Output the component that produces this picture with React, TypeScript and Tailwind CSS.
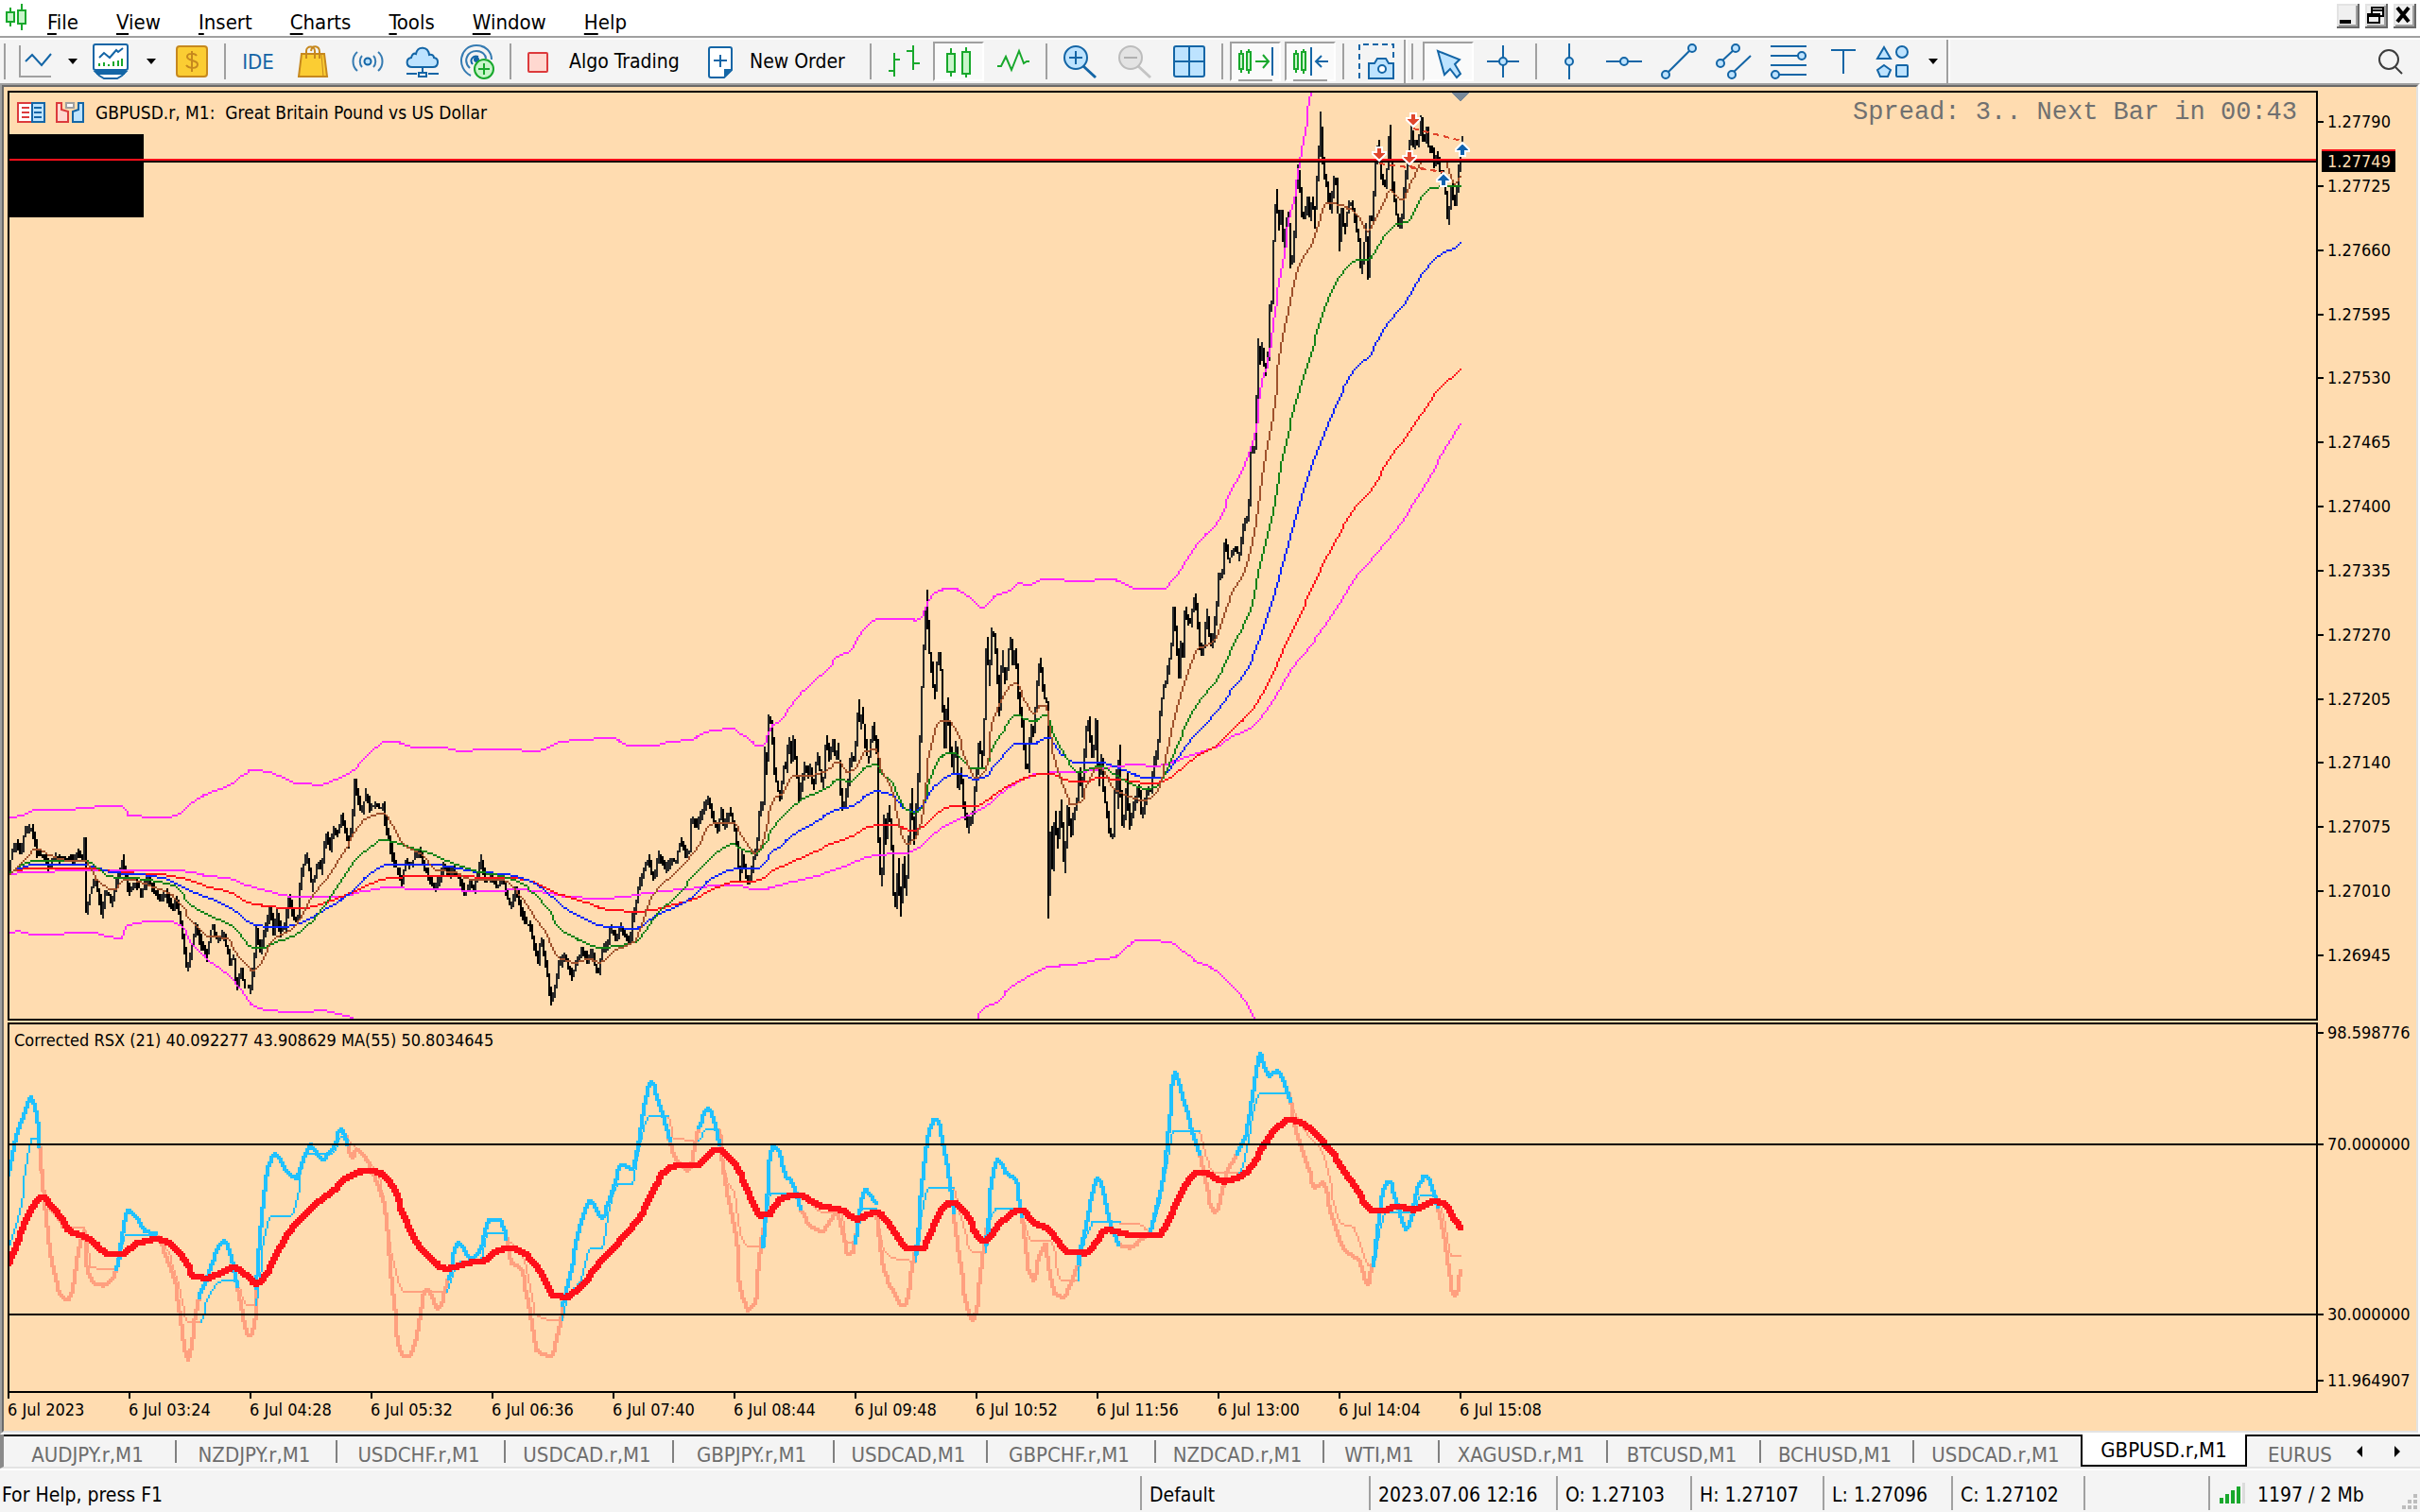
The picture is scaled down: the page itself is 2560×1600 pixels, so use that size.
import React from "react";

type Pt = [number, number];
type Frame = { ox: number; oy: number; sx: number; sy: number };

/* Each stretch of the history is digitised in its own local frame. */
const A: Frame = { ox: -10, oy: 662, sx: 1.912, sy: 3 };
const B: Frame = { ox: 770, oy: 502, sx: 2.8, sy: 3 };
const C: Frame = { ox: 1190, oy: -18, sx: 3, sy: 2.01 };
const D: Frame = { ox: -11, oy: -14, sx: 1.96, sy: 3 };
const E: Frame = { ox: 769, oy: -14, sx: 1.96, sy: 3 };

function pts(f: Frame, s: string): Pt[] {
  return s
    .trim()
    .split(/\s+/)
    .map((p) => {
      const [x, y] = p.split(",").map(Number);
      return [f.ox + x / f.sx, f.oy + y / f.sy] as Pt;
    });
}

/* Monotone cubic interpolation, so that peaks are rounded but never overshot. */
function smooth(p: Pt[]): Pt[] {
  const q = p.filter((v, i) => i === 0 || v[0] > p[i - 1][0]);
  const n = q.length;
  if (n < 3) return q;
  const slope = (i: number) => (q[i + 1][1] - q[i][1]) / (q[i + 1][0] - q[i][0]);
  const m = q.map((_, i) => {
    if (i === 0) return slope(0);
    if (i === n - 1) return slope(n - 2);
    const a = slope(i - 1);
    const b = slope(i);
    return a * b <= 0 ? 0 : (2 * a * b) / (a + b);
  });
  const out: Pt[] = [q[0]];
  for (let i = 0; i < n - 1; i++) {
    const [x0, y0] = q[i];
    const [x1, y1] = q[i + 1];
    const h = x1 - x0;
    const steps = Math.max(1, Math.ceil(h / 2));
    for (let k = 1; k <= steps; k++) {
      const t = k / steps;
      const t2 = t * t;
      const t3 = t2 * t;
      out.push([
        x0 + h * t,
        (2 * t3 - 3 * t2 + 1) * y0 + (t3 - 2 * t2 + t) * h * m[i] + (3 * t2 - 2 * t3) * y1 + (t3 - t2) * h * m[i + 1],
      ]);
    }
  }
  return out;
}

/* Draws a curve as square cells on a two-pixel grid. */
function raster(source: Pt[], size = 2): string {
  const points = smooth(source);
  let d = "";
  const off = size > 2 ? -(size - 2) / 2 : 0;
  const cell = (v: number) => Math.round((v - 1) / 2);
  for (let i = 1; i < points.length; i++) {
    let x = cell(points[i - 1][0]);
    let y = cell(points[i - 1][1]);
    const x1 = cell(points[i][0]);
    const y1 = cell(points[i][1]);
    const dx = Math.abs(x1 - x);
    const dy = -Math.abs(y1 - y);
    const ix = x < x1 ? 1 : -1;
    const iy = y < y1 ? 1 : -1;
    let err = dx + dy;
    for (;;) {
      d += `M${x * 2 + off} ${y * 2 + off}h${size}v${size}h-${size}z`;
      if (x === x1 && y === y1) break;
      const e2 = 2 * err;
      if (e2 >= dy) {
        err += dy;
        x += ix;
      }
      if (e2 <= dx) {
        err += dx;
        y += iy;
      }
    }
  }
  return d;
}

function candles(points: Pt[]): { up: string; down: string } {
  let seed = 7;
  const rnd = () => {
    seed = (seed * 16807) % 2147483647;
    return seed / 2147483647;
  };
  const at = (x: number) => {
    for (let i = 1; i < points.length; i++) {
      if (points[i][0] >= x) {
        const [ax, ay] = points[i - 1];
        const [bx, by] = points[i];
        return bx === ax ? by : ay + ((by - ay) * (x - ax)) / (bx - ax);
      }
    }
    return points[points.length - 1][1];
  };
  let up = "";
  let down = "";
  const last = points[points.length - 1][0];
  for (let x = 0; x <= last; x += 2) {
    const ys = [at(x), at(x + 2)];
    points.forEach((p) => {
      if (p[0] > x && p[0] < x + 2) ys.push(p[1]);
    });
    const top = Math.round((Math.min(...ys) - rnd() * 6) / 2) * 2;
    const bot = Math.round((Math.max(...ys) + rnd() * 6) / 2) * 2;
    const bar = `M${x} ${top}h2V${bot}h-2z`;
    if (ys[1] < ys[0]) up += bar;
    else down += bar;
  }
  return { up, down };
}

const PRICE = candles([
  ...pts(A, `20,475 26,420 36,400 44,430 52,355 66,352 76,425 90,440 100,470 112,445 150,450 158,430 170,450 172,385 176,610 186,540 196,520 208,620 216,545 228,590 240,500 250,445 262,550 275,520 288,555 300,510 312,545 326,575 338,560 350,610 358,575 368,660 380,805 390,720 398,655 408,720 420,755 430,655 440,700 455,690 466,770 474,760 480,860 488,800 496,850 508,860 514,790 520,680 528,740 536,680 548,605 556,690 560,610 568,680 578,660 586,570 596,640 604,640 606,550 612,490 622,430 632,535 646,460 652,490 660,370 670,410 676,350 684,365 692,315 706,400 714,340 718,205 724,240 732,300 742,240 750,290 762,270 770,290 776,270 782,350 790,400 798,460 806,480 814,530 822,450 830,470 848,420 858,470 868,500 878,540 890,510 898,470 910,500 920,480 930,510 942,555 952,525 960,545 974,450 984,520 996,500 1006,540 1018,500 1026,560 1034,600 1046,540 1054,610 1064,650 1074,660 1084,740 1090,770 1096,700 1106,790 1116,900 1124,860 1132,780 1144,755 1158,820 1166,780 1178,735 1190,765 1200,740 1206,790 1214,810 1218,740 1228,720 1238,670 1246,700 1258,665 1268,700 1276,710 1280,640 1288,590 1292,540 1300,500 1312,450 1324,510 1334,430 1346,480 1360,450 1368,460 1378,385 1388,430 1396,420 1400,320 1410,340 1420,300 1434,260 1444,320 1452,355 1460,300 1466,340 1478,290 1486,340`),
  ...pts(B, `0,880 8,990 16,910 24,960 34,1010 42,970 50,920 56,910 62,860 70,750 78,770 82,570 88,650 94,470 104,510 112,650 120,700 130,740 138,630 146,640 154,540 162,610 168,550 178,650 184,740 192,690 202,630 210,660 218,640 228,700 238,590 246,640 256,700 264,550 274,600 286,560 294,610 300,560 306,690 312,770 320,740 330,690 338,600 348,610 356,530 360,430 366,510 372,460 380,560 390,620 398,540 406,500 412,580 416,560 418,820 424,960 430,1010 436,790 442,870 450,770 458,850 462,1020 472,1075 478,930 484,1090 490,1050 494,920 500,1040 506,960 512,800 518,720 524,880 530,830 534,680 540,660 546,450 552,300 558,200 562,85 568,250 576,310 586,410 594,300 602,270 608,400 616,560 624,430 630,560 640,640 648,560 656,700 664,640 672,760 684,830 692,790 698,810 706,690 712,640 718,550 726,620 732,540 740,240 748,360 754,200 764,230 770,300 778,460 786,280 794,360 802,310 810,230 818,300 826,270 834,400 842,480 848,510 854,620 864,635 870,500 880,530 888,400 898,290 906,380 914,420 920,430 921,1100 925,1010 930,840 936,960 942,790 950,890 960,755 970,960 980,770 990,850 1000,770 1006,770 1014,640 1022,720 1030,600 1036,510 1044,480 1050,600 1056,600 1064,490 1072,680 1080,600 1088,730 1096,770 1106,860 1116,850 1122,650 1128,760 1132,580 1140,820 1150,780 1156,670 1162,830 1172,780 1180,740 1190,690 1200,790 1208,750 1218,710 1228,710 1236,620 1246,590 1252,500 1262,390 1272,360 1280,310 1288,250 1294,130 1302,230 1310,350 1316,250 1322,270 1328,130 1338,170 1346,180 1352,120 1358,100 1366,180 1374,280 1384,250 1392,140 1400,220 1408,250`),
  ...pts(C, `262,1140 268,1080 272,1060 280,1065 290,985 300,1030 310,1020 320,1005 334,1020 344,985 352,945 362,935 368,900 370,800 384,790 390,690 394,560 400,610 406,580 416,630 424,620 430,550 432,490 440,480 444,350 452,250 460,320 468,290 476,370 482,320 490,290 498,400 506,390 512,310 518,190 526,230 534,290 544,300 550,260 560,300 568,260 574,320 580,220 586,200 592,85 598,170 610,230 618,260 626,290 634,220 644,220 652,370 660,290 670,330 680,280 690,270 698,290 706,320 714,350 722,420 730,370 736,320 744,430 748,350 750,300 758,300 766,200 776,140 782,200 792,230 800,230 806,180 812,110 818,220 828,260 838,320 850,310 856,260 866,200 872,180 880,110 888,150 896,140 902,150 912,95 920,140 930,120 938,160 946,150 954,190 962,165 970,200 980,200 988,240 998,310 1008,240 1016,260 1022,270 1030,210 1040,140`),
]);

const MAGENTA = "#ff28ff";

const PRICE_LINES: { color: string; d: string }[] = [
  {
    color: MAGENTA,
    d: raster([
      ...pts(A, `20,315 40,311 70,293 150,288 215,280 247,280 260,308 340,315 366,300 388,268 420,240 465,212 490,182 512,164 545,172 600,206 650,211 680,195 710,172 740,125 780,75 800,75 835,92 900,95 935,104 970,100 1020,98 1080,104 1105,98 1130,77 1200,66 1240,65 1275,87 1325,87 1340,80 1400,66 1440,40 1485,34`),
      ...pts(B, `0,523 30,543 60,567 78,567 84,553 104,502 125,490 170,424 215,375 265,325 300,283 325,270 375,203 415,165 520,165 526,170 540,163 565,110 600,73 640,70 680,90 728,130 770,87 800,80 835,50 860,57 905,40 950,40 1000,45 1100,40 1125,42`),
      ...pts(C, `0,1091 90,1091 120,1070 150,1047 200,995 255,957 310,880 355,815 385,750 405,650 430,590 445,500 470,400 490,310 515,230 530,160 562,35`),
    ]),
  },
  {
    color: MAGENTA,
    d: raster([
      ...pts(A, `20,493 60,490 140,485 240,485 318,480 370,485 420,500 460,508 500,530 540,548 590,565 690,565 740,548 790,538 850,543 920,545 970,549 1050,545 1110,555 1150,567 1220,572 1270,565 1310,555 1400,540 1470,530 1490,533`),
      ...pts(B, `0,1010 45,1022 90,1020 130,1008 220,985 300,958 410,915 500,908 540,890 590,840 640,808 690,785 740,755 820,690 900,655 1000,652 1080,640 1160,628`),
      ...pts(C, `0,1465 60,1469 120,1460 220,1437 260,1428 300,1410 370,1388 430,1340 500,1260 570,1203 640,1135 710,1060 750,1032 830,965 910,885 960,825 1037,740`),
    ]),
  },
  {
    color: MAGENTA,
    d:
      raster(pts(A, `20,682 35,677 70,686 190,682 215,692 245,698 258,658 310,645 340,645 368,660 385,710 420,765 465,820 490,870 515,915 540,927 610,933 650,928 680,937 712,950`)) +
      raster(pts(B, `713,1433 720,1412 735,1395 760,1388 800,1345 870,1295 920,1270 1000,1262 1060,1247 1120,1238 1160,1200 1190,1185 1275,1190 1320,1218 1365,1255 1410,1275 1460,1325 1500,1370 1530,1433`)),
  },
  {
    color: "#ff0f1a",
    d: raster([
      ...pts(A, `20,487 60,478 170,475 230,488 330,497 370,508 420,535 460,550 510,588 560,600 610,603 650,590 710,555 780,510 840,502 940,500 980,508 1040,508 1070,515 1130,558 1180,582 1230,607 1290,614 1350,598 1410,570 1440,545 1485,520`),
      ...pts(B, `0,1000 50,998 80,985 110,962 160,938 220,908 300,870 340,855 400,822 460,820 520,837 550,825 600,775 645,758 710,758 740,740 830,680 920,655 980,678 1030,682 1080,668 1120,675`),
      ...pts(C, `0,1501 40,1506 80,1503 120,1490 200,1447 260,1425 320,1385 370,1352 430,1285 480,1205 540,1125 610,1025 660,962 710,910 740,890 820,805 850,780 920,710 970,665 1037,625`),
    ]),
  },
  {
    color: "#0a24ff",
    d: raster([
      ...pts(A, `20,488 65,466 165,465 230,490 280,495 330,508 380,545 470,605 515,655 560,664 600,655 660,605 710,555 745,500 785,465 870,465 910,472 960,487 1020,495 1060,510 1105,550 1140,600 1180,635 1225,662 1285,667 1330,625 1390,580 1430,520 1480,480`),
      ...pts(B, `0,958 60,957 75,945 100,907 130,885 165,850 215,820 300,768 340,760 380,727 410,712 460,727 500,770 530,775 550,750 590,690 640,658 670,660 705,675 735,665 765,628 825,562 880,560 920,540 960,595 1010,623 1070,620 1120,635`),
      ...pts(C, `0,1487 40,1493 90,1492 130,1458 190,1405 250,1362 300,1315 350,1270 400,1195 440,1110 480,1010 540,870 600,760 660,670 700,625 745,595 800,530 850,492 920,415 980,377 1020,365 1037,355`),
    ]),
  },
  {
    color: "#128216",
    d: raster([
      ...pts(A, `20,490 70,453 170,453 225,503 270,508 350,530 385,590 430,632 465,655 515,728 535,728 560,710 595,690 650,610 700,490 740,420 775,387 800,395 840,415 870,428 900,450 960,485 1020,503 1060,530 1110,610 1130,665 1170,702 1215,728 1285,710 1320,640 1370,560 1410,490 1450,425 1485,400`),
      ...pts(B, `0,888 55,908 80,880 105,830 170,755 215,725 260,705 300,675 335,680 380,638 410,628 425,650 460,690 500,770 525,780 545,765 570,680 600,605 630,590 655,597 690,637 730,640 760,565 790,515 825,470 850,480 875,490 915,470 930,510 970,600 1010,650 1070,633 1120,662`),
      ...pts(C, `0,1510 40,1517 70,1513 100,1480 150,1400 200,1335 260,1285 320,1200 370,1135 400,1040 440,925 470,810 520,680 570,570 610,485 640,440 700,395 750,388 790,345 830,317 865,310 900,270 950,238 1037,235`),
    ]),
  },
  {
    color: "#a0522d",
    d: raster([
      ...pts(A, `20,495 45,460 75,415 100,435 140,452 172,453 195,510 230,545 255,510 300,530 345,560 365,590 385,640 420,690 460,700 480,750 512,800 525,780 550,710 600,655 630,570 660,510 700,410 740,320 775,302 790,330 815,400 850,430 880,480 920,490 950,510 1020,515 1050,560 1075,620 1100,670 1130,760 1165,775 1190,765 1215,775 1240,740 1285,705 1320,560 1360,500 1400,430 1445,335 1485,333`),
      ...pts(B, `0,830 20,865 50,908 70,890 90,800 110,735 130,720 170,663 200,665 260,648 300,620 325,652 345,645 375,590 412,578 420,620 460,720 500,880 525,865 545,800 565,620 600,488 625,488 650,530 710,670 735,640 760,480 825,368 840,400 880,465 900,440 915,440 925,530 960,680 990,755 1020,740 1040,680 1060,640 1080,640 1110,700`),
      ...pts(C, `0,1537 35,1542 70,1525 95,1470 130,1360 170,1270 200,1220 250,1205 300,1115 350,1050 380,970 410,830 440,720 460,600 490,500 520,410 575,340 610,270 650,275 700,290 740,330 770,295 815,245 850,265 880,225 920,180 980,178 1015,230 1037,215`),
    ]),
  },
];

const join = (f: Frame, size: number, runs: string[]) => runs.map((r) => raster(pts(f, r), size)).join("");

const RSX_UP =
  join(D, 4, [
    "20,520 35,400 50,330 65,275 74,300 84,430",
    "243,820 255,720 265,630 285,655 305,700 325,707",
    "414,910 430,850 445,780 465,730 480,765 495,870",
    "535,880 545,650 560,480 572,455 590,495 618,530 630,470 645,425 670,470 690,440 710,375 720,420",
    "932,850 953,735 978,790 1000,750 1015,660 1035,660 1052,720",
    "1170,930 1190,790 1210,650 1225,600 1250,655 1270,580 1290,490 1315,500 1325,430 1340,280 1352,225 1365,275 1390,410",
    "1450,370 1470,310 1482,345 1492,420",
  ]) +
  join(E, 4, [
    "55,745 65,550 75,430 85,440 100,520 115,540 133,628",
    "248,735 265,565 290,610",
    "373,770 385,560 400,380 412,342 422,370 435,470 450,640",
    "518,740 530,540 540,470 555,505 580,540 592,650",
    "708,800 725,680 740,560 750,530 760,570 775,680 790,740",
    "860,700 885,520 900,300 910,195 920,250 935,330 962,450",
    "1040,450 1060,370 1075,230 1085,135 1105,205 1120,190 1130,205 1147,285",
    "1322,805 1335,620 1352,540 1368,600 1387,690 1405,620 1415,550 1428,525 1440,550 1455,620",
  ]) +
  join(D, 2, [
    "20,750 35,680 50,580 55,500 68,405 84,405",
    "243,818 262,712 325,712",
    "418,987 440,890 465,855 493,855",
    "535,935 540,850 550,730 565,650 605,650 618,590 625,520 635,450 690,450 710,400 722,405",
    "930,890 950,800 1000,790 1010,706 1052,706",
    "1170,980 1180,900 1205,860 1225,752 1250,750 1265,620 1285,548 1315,548 1325,440 1348,333 1388,333",
    "1450,410 1470,375 1490,375",
  ]) +
  join(E, 2, [
    "57,747 72,578 135,578",
    "247,737 258,627 290,627",
    "373,795 385,640 400,562 450,562",
    "518,765 527,660 540,627 590,627",
    "708,855 725,710 742,668 795,668",
    "860,700 880,580 895,470 905,382 962,382",
    "1042,513 1060,440 1075,300 1085,262 1145,262",
    "1322,805 1335,680 1350,638 1405,638 1420,585 1452,585",
  ]);

const RSX_DOWN =
  join(D, 4, [
    "84,400 95,600 110,800 130,905 140,915 150,905 165,760 176,700 185,830 195,862 215,870 235,850 245,800",
    "325,710 350,790 370,900 393,1105 402,1020 414,900",
    "495,870 518,1030 528,1000 535,880",
    "720,400 732,465 742,440 770,500 800,620 815,880 835,1090 850,1095 865,1030 880,900 890,885 908,945 920,920 932,840",
    "1052,700 1062,800 1078,810 1095,900 1115,1075 1145,1095 1160,1010 1170,930",
    "1388,400 1400,460 1428,505 1440,450 1450,370",
    "1492,380 1510,570 1528,720 1538,880 1553,950",
  ]) +
  join(E, 4, [
    "25,950 38,920 55,690",
    "133,630 150,675 178,700 195,660 210,630 220,700 232,770 242,765 250,690",
    "290,640 305,820 325,890 340,930 350,930 362,840 373,750",
    "452,650 465,820 490,980 500,920 518,690",
    "592,650 605,820 617,855 625,800 642,740 650,840 660,895 680,908 695,860 708,800",
    "790,740 815,750 840,725 860,700",
    "962,450 975,560 992,638 1005,590 1020,500 1040,450",
    "1147,285 1165,400 1190,520 1200,560 1215,545 1235,650 1262,760 1290,790 1308,865 1322,790",
    "1455,620 1470,740 1480,860 1490,903 1502,825",
  ]) +
  join(D, 2, [
    "84,400 95,600 120,660 135,687 178,687 190,812 220,818 243,818",
    "325,712 345,750 365,830 393,987 418,987",
    "493,870 518,935 533,935",
    "722,405 740,435 790,540 815,780 838,890 930,890",
    "1052,720 1085,780 1115,965 1145,980 1168,980",
    "1388,333 1400,405 1440,410",
    "1492,375 1510,540 1525,580 1535,700 1555,748 1568,748",
  ]) +
  join(E, 2, [
    "25,747 55,747",
    "135,580 180,637 215,637 228,735 245,737",
    "292,640 305,760 330,785 370,795",
    "452,562 470,680 490,765 518,765",
    "592,650 610,728 650,728 675,855 707,855",
    "797,673 835,677 855,700",
    "962,382 975,470 992,513 1042,513",
    "1147,262 1160,335 1185,390 1215,450 1240,610 1255,675 1280,688 1295,740 1310,805 1320,805",
    "1452,585 1465,650 1480,777 1500,777",
  ]);

const RSX_MA = raster(
  [
    ...pts(D, `20,800 45,705 75,610 90,590 110,620 150,700 180,718 235,773 255,770 290,735 330,725 355,740 380,780 405,840 430,847 455,835 485,815 500,825 535,865 555,830 600,705 650,620 700,560 725,525 765,505 790,515 815,555 840,650 870,745 930,817 970,800 1005,793 1030,763 1060,752 1085,765 1110,800 1150,900 1175,907 1195,890 1240,810 1290,725 1335,635 1360,555 1380,510 1400,492 1445,490 1490,440 1525,485`),
    ...pts(E, `0,495 20,560 50,648 65,645 95,595 125,585 180,620 215,630 250,660 290,638 310,665 360,755 385,755 400,710 430,620 448,608 465,625 515,728 550,670 590,630 620,675 645,690 690,765 720,768 770,695 830,713 875,713 890,680 935,540 965,510 1010,540 1050,520 1080,460 1120,370 1150,345 1165,350 1230,440 1270,530 1325,635 1345,632 1370,618 1405,630 1445,605 1465,608 1480,640 1500,688`),
  ],
  6,
);

const BLUE = "#1365a6";
const SKY = "#bde3ff";
const GREEN = "#18a82c";
const MINT = "#c9f5cb";
const GREY = "#a0a0a0";

const Svg = ({ children, w = 38, h = 38 }: { children: React.ReactNode; w?: number; h?: number }) => (
  <svg width={w} height={h} viewBox={`0 0 ${w} ${h}`} fill="none" className="shrink-0" aria-hidden="true">
    {children}
  </svg>
);

function Tool({
  label,
  children,
  on = false,
  mark = false,
  narrow = false,
}: {
  label: string;
  children: React.ReactNode;
  on?: boolean;
  mark?: boolean;
  narrow?: boolean;
}) {
  return (
    <button
      type="button"
      aria-label={label}
      aria-pressed={on}
      className={`relative flex h-full shrink-0 items-center justify-center ${narrow ? "w-[46px]" : "w-[58px]"}`}
    >
      {on && (
        <span className="absolute inset-x-[2px] inset-y-[2px] border-2 border-t-[#a0a0a0] border-l-[#a0a0a0] border-r-white border-b-white bg-[#fafafa]" />
      )}
      <span className="relative">{children}</span>
      {mark && <span className="absolute inset-x-[11px] bottom-[2px] h-[2px] bg-[#a0a0a0]" />}
    </button>
  );
}

const Drop = ({ label }: { label: string }) => (
  <button type="button" aria-label={label} className="flex h-full w-7 shrink-0 items-center justify-center">
    <svg width="12" height="8" viewBox="0 0 12 8" aria-hidden="true">
      <path d="M1 1h10L6 7z" fill="#000" />
    </svg>
  </button>
);

const Sep = () => (
  <span className="flex h-full w-3 shrink-0 justify-center py-1">
    <span className="w-[2px] bg-[#a0a0a0]" />
  </span>
);

function Toolbar() {
  return (
    <div
      role="toolbar"
      aria-label="Standard"
      className="flex h-[50px] items-center overflow-hidden border-t-2 border-[#a0a0a0] bg-[#f4f4f4] text-[21px]"
    >
      <div className="flex h-full w-full items-center border-t-2 border-white">
        <span className="ml-1 h-[38px] w-[2px] bg-[#a0a0a0]" />
        <span className="w-[2px]" />
        <Tool label="Chart type">
          <Svg>
            <path d="M3 2v33h33" stroke={GREY} strokeWidth="2" />
            <path d="M9 19l7-7 10 11 10-12" stroke={BLUE} strokeWidth="2" />
          </Svg>
        </Tool>
        <span className="-mx-[3px] flex h-full">
          <Drop label="Chart type list" />
        </span>
        <Tool label="Profiles">
          <Svg>
            <path d="M3 30h32l-4 4-5 3H12l-5-3z" fill="#fff" stroke={BLUE} strokeWidth="2" />
            <path d="M4 32h30" stroke={BLUE} strokeWidth="2" />
            <rect x="1" y="1" width="36" height="27" rx="2" fill="#fff" stroke={BLUE} strokeWidth="2" />
            <path d="M7 15l5-5 6 5 7-8 2 2 5-4" stroke={BLUE} strokeWidth="2" />
            <path d="M7 24v-3M12 24v-4M17 24v-2M22 24v-5M27 24v-6M31 24v-8" stroke={GREEN} strokeWidth="2" />
          </Svg>
        </Tool>
        <Drop label="Profile list" />
        <Tool label="Market">
          <Svg>
            <rect x="3" y="3" width="32" height="32" rx="3" fill="#fbcd33" stroke="#c6881e" strokeWidth="2" />
            <path d="M24 13c-2-3-10-3-10 1 0 5 11 3 11 8 0 5-9 5-12 1M19 8v22" stroke="#c6881e" strokeWidth="2" />
          </Svg>
        </Tool>
        <Sep />
        <button type="button" className="h-full w-[58px] text-[22px] text-[#1365a6]">
          IDE
        </button>
        <Tool label="Shop">
          <Svg>
            <path d="M7 11h24l3 24H4z" fill="#fbcd33" stroke="#c6881e" strokeWidth="2" />
            <path d="M28 11l2 24" stroke="#c6881e" />
            <path d="M12 16V8c0-6 9-6 9 0v8M17 8c1-7 9-6 9 1v7" stroke="#c6881e" strokeWidth="2" />
          </Svg>
        </Tool>
        <Tool label="Signals">
          <Svg>
            <circle cx="19" cy="19" r="3.5" fill={SKY} stroke={BLUE} strokeWidth="2" />
            <path d="M13 13c-3 3-3 9 0 12M25 13c3 3 3 9 0 12M8 9c-6 5-6 15 0 20M30 9c6 5 6 15 0 20" stroke={BLUE} strokeWidth="2" opacity=".85" />
          </Svg>
        </Tool>
        <Tool label="Cloud">
          <Svg>
            <path d="M8 25c-7 0-7-9-1-10 1-4 3-5 5-4 2-9 13-8 14 1 3-1 5 1 5 3 6 1 5 10-1 10z" fill={SKY} stroke={BLUE} strokeWidth="2" />
            <path d="M19 25v6M2 32h11M25 32h11M15 31h8v4h-8z" stroke={BLUE} strokeWidth="2" />
          </Svg>
        </Tool>
        <Tool label="VPS">
          <Svg>
            <path d="M12 34C-4 26 0 2 18 2c10 0 16 7 16 15M11 26C3 18 9 8 18 8c6 0 10 4 10 8" stroke={BLUE} strokeWidth="2" opacity=".85" />
            <path d="M14 22c-4-5 1-10 6-8" stroke={BLUE} strokeWidth="2" />
            <circle cx="18" cy="17" r="3" fill={BLUE} />
            <circle cx="26" cy="27" r="10" fill={MINT} stroke={GREEN} strokeWidth="2" />
            <path d="M26 21v12M20 27h12" stroke={GREEN} strokeWidth="2" />
          </Svg>
        </Tool>
        <Sep />
        <button type="button" className="flex h-full w-[190px] shrink-0 items-center gap-[22px] pt-[2px] pl-3 whitespace-nowrap">
          <Svg w={22} h={22}>
            <rect x="1" y="1" width="20" height="20" rx="1" fill="#ffd8d0" stroke="#dc3a3c" strokeWidth="2" />
          </Svg>
          Algo Trading
        </button>
        <button type="button" className="flex h-full w-[179px] shrink-0 items-center gap-[17px] pt-[2px] pl-3 whitespace-nowrap">
          <Svg w={28} h={34}>
            <path d="M4 1h20q2 0 2 2v22l-8 8H4q-2 0-2-2V3q0-2 2-2z" fill="#fff" stroke={BLUE} strokeWidth="2" />
            <path d="M26 24h-8v9z" fill={BLUE} />
            <path d="M14 9v13M7 15h14" stroke={BLUE} strokeWidth="2" />
          </Svg>
          New Order
        </button>
        <Sep />
        <Tool label="Bar chart">
          <Svg>
            <path d="M9 35V10M9 17h6M3 29h6M29 28V2M22 8h7M29 21h7" stroke={GREEN} strokeWidth="2" />
          </Svg>
        </Tool>
        <Tool label="Candlesticks" on>
          <Svg>
            <path d="M11 5v30M27 4v32" stroke={GREEN} strokeWidth="2" />
            <rect x="7" y="11" width="8" height="19" fill={MINT} stroke={GREEN} strokeWidth="2" />
            <rect x="23" y="9" width="8" height="23" fill={MINT} stroke={GREEN} strokeWidth="2" />
          </Svg>
        </Tool>
        <Tool label="Line chart">
          <Svg>
            <path d="M2 24h4l5-10 6 14 8-20 5 13 3-2h3" stroke={GREEN} strokeWidth="2" />
          </Svg>
        </Tool>
        <Sep />
        <Tool label="Zoom in">
          <Svg>
            <path d="M23 24l13 12" stroke={BLUE} strokeWidth="3" />
            <circle cx="15" cy="15" r="12" fill={SKY} stroke={BLUE} strokeWidth="2" />
            <path d="M15 8v14M8 15h14" stroke={BLUE} strokeWidth="2" />
          </Svg>
        </Tool>
        <Tool label="Zoom out">
          <Svg>
            <path d="M23 24l13 12" stroke="#c4c4c4" strokeWidth="3" />
            <circle cx="15" cy="15" r="12" fill="#e3e3e3" stroke="#bcbcbc" strokeWidth="2" />
            <path d="M8 15h14" stroke="#b0b0b0" strokeWidth="2" />
          </Svg>
        </Tool>
        <Tool label="Tile windows">
          <Svg>
            <rect x="3" y="3" width="32" height="32" rx="2" fill={SKY} stroke={BLUE} strokeWidth="2" />
            <path d="M19 3v32M3 19h32" stroke={BLUE} strokeWidth="2" />
          </Svg>
        </Tool>
        <Sep />
        <Tool label="Auto scroll" on mark>
          <Svg>
            <path d="M4 7v24M12 6v26M19 19h14M27 12l6 7-6 7" stroke={GREEN} strokeWidth="2" />
            <rect x="2" y="11" width="4" height="16" fill={MINT} stroke={GREEN} strokeWidth="2" />
            <rect x="10" y="9" width="4" height="19" fill={MINT} stroke={GREEN} strokeWidth="2" />
            <path d="M37 4v30" stroke={BLUE} strokeWidth="2" />
          </Svg>
        </Tool>
        <Tool label="Chart shift" on mark>
          <Svg>
            <path d="M4 7v24M12 6v26" stroke={GREEN} strokeWidth="2" />
            <rect x="2" y="11" width="4" height="16" fill={MINT} stroke={GREEN} strokeWidth="2" />
            <rect x="10" y="9" width="4" height="19" fill={MINT} stroke={GREEN} strokeWidth="2" />
            <path d="M20 4v30M38 19H25M31 13l-6 6 6 6" stroke={BLUE} strokeWidth="2" />
          </Svg>
        </Tool>
        <Sep />
        <Tool label="Screenshot">
          <Svg>
            <path d="M1 37V1h36v14" stroke={BLUE} strokeWidth="2" strokeDasharray="6 4" />
            <path d="M11 37V21h6l3-5h9l3 5h5v16z" fill={SKY} stroke={BLUE} strokeWidth="2" />
            <circle cx="25" cy="27" r="4" fill="#fff" stroke={BLUE} strokeWidth="2" />
          </Svg>
        </Tool>
        <span className="h-full w-[2px] bg-[#a0a0a0]" />
        <span className="h-full w-[2px] bg-white" />
        <span className="mr-2 ml-1 h-[38px] w-[2px] bg-[#a0a0a0]" />
        <Tool label="Cursor" on>
          <Svg>
            <path d="M8 8l23 9-5 5 6 10-4 4-7-9-6 6z" fill={SKY} stroke={BLUE} strokeWidth="2" />
          </Svg>
        </Tool>
        <Tool label="Crosshair">
          <Svg>
            <path d="M19 2v34M2 19h34" stroke={BLUE} strokeWidth="2" />
            <circle cx="19" cy="19" r="4" fill={SKY} stroke={BLUE} strokeWidth="2" />
          </Svg>
        </Tool>
        <Sep />
        <Tool label="Vertical line">
          <Svg>
            <path d="M19 0v38" stroke={BLUE} strokeWidth="2" />
            <circle cx="19" cy="19" r="4" fill={SKY} stroke={BLUE} strokeWidth="2" />
          </Svg>
        </Tool>
        <Tool label="Horizontal line">
          <Svg>
            <path d="M0 19h38" stroke={BLUE} strokeWidth="2" />
            <circle cx="19" cy="19" r="4" fill={SKY} stroke={BLUE} strokeWidth="2" />
          </Svg>
        </Tool>
        <Tool label="Trend line">
          <Svg>
            <path d="M6 32L32 6" stroke={BLUE} strokeWidth="2" />
            <circle cx="5" cy="33" r="4" fill={SKY} stroke={BLUE} strokeWidth="2" />
            <circle cx="33" cy="5" r="4" fill={SKY} stroke={BLUE} strokeWidth="2" />
          </Svg>
        </Tool>
        <Tool label="Channel">
          <Svg>
            <path d="M5 20L21 5M17 32l20-19" stroke={BLUE} strokeWidth="2" />
            <circle cx="5" cy="21" r="4" fill={SKY} stroke={BLUE} strokeWidth="2" />
            <circle cx="21" cy="5" r="4" fill={SKY} stroke={BLUE} strokeWidth="2" />
            <circle cx="17" cy="33" r="4" fill={SKY} stroke={BLUE} strokeWidth="2" />
          </Svg>
        </Tool>
        <Tool label="Fibonacci">
          <Svg>
            <path d="M0 3h38M0 13h38M0 23h38M0 33h38" stroke={BLUE} strokeWidth="2" />
            <circle cx="33" cy="13" r="4" fill={SKY} stroke={BLUE} strokeWidth="2" />
            <circle cx="5" cy="33" r="4" fill={SKY} stroke={BLUE} strokeWidth="2" />
          </Svg>
        </Tool>
        <Tool label="Text">
          <Svg>
            <path d="M6 7h26M19 7v25" stroke={BLUE} strokeWidth="2" />
          </Svg>
        </Tool>
        <Tool label="Shapes" narrow>
          <Svg>
            <path d="M10 4l7 12H3z" fill={SKY} stroke={BLUE} strokeWidth="2" />
            <circle cx="29" cy="9" r="6" fill={SKY} stroke={BLUE} strokeWidth="2" />
            <path d="M10 23l7 5-3 7H6l-3-7z" fill={SKY} stroke={BLUE} strokeWidth="2" />
            <rect x="23" y="23" width="12" height="12" rx="1" fill={SKY} stroke={BLUE} strokeWidth="2" />
          </Svg>
        </Tool>
        <span className="ml-[6px] flex h-full">
          <Drop label="Shape list" />
        </span>
        <span className="h-full w-[2px] bg-[#a0a0a0]" />
        <span className="h-full w-[2px] bg-white" />
        <button type="button" aria-label="Search" className="mr-3 ml-auto flex h-full w-[38px] items-center justify-center">
          <Svg w={30} h={30}>
            <circle cx="13" cy="13" r="10" stroke="#3c3c3c" strokeWidth="2" />
            <path d="M20 21l7 7" stroke="#3c3c3c" strokeWidth="2" />
          </Svg>
        </button>
      </div>
    </div>
  );
}

const MENUS = ["File", "View", "Insert", "Charts", "Tools", "Window", "Help"];

function MenuBar() {
  return (
    <header className="flex h-[38px] items-center bg-white text-[22px]">
      <svg width="24" height="30" viewBox="0 0 24 30" className="ml-[6px] shrink-0" aria-hidden="true">
        <path d="M5 4v20M17 0v28" stroke={GREEN} strokeWidth="2" />
        <path d="M1 9h8v10H1zM13 7h8v14h-8z" fill={MINT} stroke={GREEN} strokeWidth="2" />
      </svg>
      <nav className="flex pt-2" aria-label="Main menu">
        {MENUS.map((m) => (
          <button key={m} type="button" className="px-5">
            <span className="underline decoration-2 underline-offset-4">{m[0]}</span>
            {m.slice(1)}
          </button>
        ))}
      </nav>
      <div className="mr-[4px] mb-1 ml-auto flex gap-[6px]">
        {["Minimize", "Restore", "Close"].map((n) => (
          <button
            key={n}
            type="button"
            aria-label={n}
            className="flex h-[26px] w-6 items-center justify-center border-r-2 border-b-2 border-[#696969] bg-[#f0f0f0] shadow-[inset_2px_2px_0_#e3e3e3,inset_-2px_-2px_0_#a0a0a0]"
          >
            <svg width="20" height="20" viewBox="0 0 20 20" fill="none" stroke="#000" aria-hidden="true">
              {n === "Minimize" && <path d="M2 17h12" strokeWidth="4" />}
              {n === "Restore" && <path d="M6 2h12v9H6zM6 5h12M2 9h12v9H2zM2 11h12" fill="#f0f0f0" strokeWidth="2" />}
              {n === "Close" && <path d="M3 2l12 15M15 2L3 17" strokeWidth="4" />}
            </svg>
          </button>
        ))}
      </div>
    </header>
  );
}

const Arrow = ({ x, y, up = false }: { x: number; y: number; up?: boolean }) => (
  <path
    transform={`translate(${x} ${y})${up ? "" : " scale(1 -1)"}`}
    d="M0 -7L7 0V2H3V7H-3V2H-7V0z"
    fill={up ? "#1062ae" : "#e0452c"}
    stroke="#fff"
    strokeWidth="2"
  />
);

const PRICES = ["1.27790", "1.27725", "1.27660", "1.27595", "1.27530", "1.27465", "1.27400", "1.27335", "1.27270", "1.27205", "1.27140", "1.27075", "1.27010", "1.26945"];
const TIMES = ["2023", "03:24", "04:28", "05:32", "06:36", "07:40", "08:44", "09:48", "10:52", "11:56", "13:00", "14:04", "15:08"];

const AxisLabel = ({ children }: { children: string }) => (
  <span className="flex h-5 items-center gap-1 leading-5">
    <span className="h-[2px] w-[6px] bg-black" />
    {children}
  </span>
);

function PriceChart() {
  return (
    <section aria-label="GBPUSD.r price" className="relative min-h-[984px] overflow-hidden border-2 border-black">
      <svg className="absolute inset-0 size-full" shapeRendering="crispEdges" aria-hidden="true">
        <rect x="0" y="44" width="142" height="88" fill="#000" />
        <path d={PRICE.up} fill="#282828" />
        <path d={PRICE.down} fill="#000" />
        {PRICE_LINES.map((l, i) => (
          <path key={i} d={l.d} fill={l.color} />
        ))}
        <rect x="0" y="72" width="100%" height="2" fill="#000" />
        <rect x="0" y="70" width="100%" height="2" fill="#ff0f1a" />
        <path d="M1526 0h18l-9 10z" fill="#778899" />
        <path d="M1485 38L1536 51M1449 75L1517 84M1481 78L1517 84" stroke="#e0452c" strokeWidth="2" strokeDasharray="6 5" />
        <g shapeRendering="geometricPrecision">
          <Arrow x={1485} y={29} />
          <Arrow x={1449} y={65} />
          <Arrow x={1481} y={69} />
          <Arrow x={1517} y={92} up />
          <Arrow x={1537} y={60} up />
        </g>
      </svg>
      <div className="relative flex items-start justify-between pt-[9px] pr-5 pl-2">
        <h1 className="flex items-center text-[19px] leading-6 whitespace-pre">
          <svg width="32" height="24" viewBox="0 0 32 24" fill="none" className="mr-[9px]" aria-hidden="true">
            <path d="M16 2H1v20h15" fill="#fff" stroke="#dc3a3c" strokeWidth="2" />
            <path d="M16 2h13v20H16z" fill={SKY} stroke={BLUE} strokeWidth="2" />
            <path d="M5 7h8M5 12h8M5 17h8" stroke="#dc3a3c" strokeWidth="2" />
            <path d="M18 7h8M18 12h8M18 17h8" stroke={BLUE} strokeWidth="2" />
          </svg>
          <svg width="32" height="24" viewBox="0 0 32 24" fill="none" className="mr-[10px]" aria-hidden="true">
            <path d="M1 2h5v7l7 2v11H1z" fill="#ffd8d0" stroke="#dc3a3c" strokeWidth="2" />
            <path d="M29 2h-5v7l-6 2v11h11z" fill={SKY} stroke={BLUE} strokeWidth="2" />
            <path d="M11 2h8v5h-8z" fill="#fff" stroke={GREY} strokeWidth="2" />
          </svg>
          {"GBPUSD.r, M1:  Great Britain Pound vs US Dollar"}
        </h1>
        <p className="font-['Liberation_Mono',monospace] text-[27px] leading-6 text-[#707070]">Spread: 3.. Next Bar in 00:43</p>
      </div>
    </section>
  );
}

function RsxChart() {
  return (
    <section aria-label="Corrected RSX" className="relative h-[392px] overflow-hidden border-2 border-black">
      <svg className="absolute inset-0 size-full" shapeRendering="crispEdges" aria-hidden="true">
        <path d={RSX_DOWN} fill="#ffa07f" />
        <path d={RSX_UP} fill="#1fc1ff" />
        <path d={RSX_MA} fill="#ff0f1a" />
        <rect x="0" y="126" width="100%" height="2" fill="#000" />
        <rect x="0" y="306" width="100%" height="2" fill="#000" />
      </svg>
      <h2 className="relative px-[5px] pt-[5px] text-[18px] leading-6">Corrected RSX (21) 40.092277 43.908629 MA(55) 50.8034645</h2>
    </section>
  );
}

function Charts() {
  return (
    <main className="grid flex-1 grid-cols-[1fr_104px] grid-rows-[1fr_392px_38px] gap-y-[2px] overflow-hidden border-t-2 border-r-2 border-b-2 border-l-2 border-t-[#696969] border-r-[#e3e3e3] border-b-[#e3e3e3] border-l-[#696969] bg-[#ffdcb0] pt-1 pl-1 text-[18px]">
      <PriceChart />
      <div className="relative flex flex-col justify-between pt-[23px] pb-[59px]">
        {PRICES.map((p) => (
          <AxisLabel key={p}>{p}</AxisLabel>
        ))}
        <span className="absolute top-[62px] left-1 h-6 w-[78px] border-t-2 border-[#ff0f1a] bg-black pl-[6px] leading-[22px] text-[#ffdcb0]">1.27749</span>
      </div>
      <RsxChart />
      <div className="flex flex-col pt-[1px] pb-[3px]">
        <AxisLabel>98.598776</AxisLabel>
        <span className="mt-[98px]">
          <AxisLabel>70.000000</AxisLabel>
        </span>
        <span className="mt-40">
          <AxisLabel>30.000000</AxisLabel>
        </span>
        <span className="mt-auto">
          <AxisLabel>11.964907</AxisLabel>
        </span>
      </div>
      <div className="col-span-2 -mt-[2px] flex">
        {TIMES.map((t) => (
          <span key={t} className="w-32 shrink-0 whitespace-nowrap">
            <span className="block h-[6px] w-[2px] bg-black" />
            <span className="block leading-6">6 Jul {t}</span>
          </span>
        ))}
      </div>
    </main>
  );
}

const TABS: [string, string][] = [
  ["AUDJPY.r,M1", "w-[183px]"],
  ["NZDJPY.r,M1", "w-[170px]"],
  ["USDCHF.r,M1", "w-[178px]"],
  ["USDCAD.r,M1", "w-[178px]"],
  ["GBPJPY.r,M1", "w-[170px]"],
  ["USDCAD,M1", "w-[162px]"],
  ["GBPCHF.r,M1", "w-[178px]"],
  ["NZDCAD.r,M1", "w-[178px]"],
  ["WTI,M1", "w-[122px]"],
  ["XAGUSD.r,M1", "w-[178px]"],
  ["BTCUSD,M1", "w-[162px]"],
  ["BCHUSD,M1", "w-[162px]"],
  ["USDCAD.r,M1", "w-[176px]"],
  ["GBPUSD.r,M1", "w-[176px]"],
];

function Tabs() {
  return (
    <div className="border-b-2 border-white">
      <div
        role="tablist"
        aria-label="Charts"
        className="flex h-9 overflow-hidden border-b-2 border-l-4 border-b-[#e3e3e3] border-l-[#8a8a8a] bg-[#f4f4f4] text-[22px] text-[#6d6d6d]"
      >
        {TABS.map(([name, width], i) =>
          i === 13 ? (
            <button
              key={i}
              type="button"
              role="tab"
              aria-selected="true"
              className={`${width} h-[34px] shrink-0 border-2 border-t-0 border-black bg-white text-center leading-[34px] whitespace-nowrap text-black`}
            >
              {name}
            </button>
          ) : (
            <button
              key={i}
              type="button"
              role="tab"
              aria-selected="false"
              className={`${width} flex h-full shrink-0 items-center justify-center border-t-2 border-black whitespace-nowrap`}
            >
              <span className="flex-1 pt-[6px] pr-1">{name}</span>
              {i < 12 && <span className="h-6 w-[2px] bg-[#808080]" />}
            </button>
          ),
        )}
        <div className="flex flex-1 items-center border-t-2 border-black pr-5 pl-[22px]">
          <button type="button" role="tab" aria-selected="false" className="w-[68px] overflow-hidden pt-[6px] text-left">
            EURUS
          </button>
          <button type="button" aria-label="Scroll tabs left" className="ml-auto px-4">
            <svg width="8" height="14" viewBox="0 0 8 14" aria-hidden="true">
              <path d="M7 1v12L1 7z" fill="#000" />
            </svg>
          </button>
          <button type="button" aria-label="Scroll tabs right" className="pl-4">
            <svg width="8" height="14" viewBox="0 0 8 14" aria-hidden="true">
              <path d="M1 1v12l6-6z" fill="#000" />
            </svg>
          </button>
        </div>
      </div>
    </div>
  );
}

const STATUS: [string, string][] = [
  ["Default", "w-[242px]"],
  ["2023.07.06 12:16", "w-[198px]"],
  ["O: 1.27103", "w-[142px]"],
  ["H: 1.27107", "w-[140px]"],
  ["L: 1.27096", "w-[136px]"],
  ["C: 1.27102", "w-[140px]"],
  ["", "w-[132px]"],
];

function StatusBar() {
  return (
    <footer className="flex h-11 items-stretch bg-[#f4f4f4] pt-[6px] pb-[2px] text-[21px] whitespace-nowrap">
      <span className="flex-1 self-center pt-[5px] pl-[2px]">For Help, press F1</span>
      {STATUS.map(([s, width], i) => (
        <span key={i} className={`${width} flex shrink-0 items-center border-l-2 border-[#a0a0a0] pt-[5px] pl-2`}>
          {s}
        </span>
      ))}
      <span className="flex w-[224px] shrink-0 items-center border-l-2 border-[#a0a0a0] pl-2">
        <svg width="30" height="26" viewBox="0 0 30 26" className="mr-3" aria-hidden="true">
          <path d="M2 18h4v6H2zM8 14h4v10H8zM14 10h4v14h-4zM20 6h4v18h-4z" fill={GREEN} />
          <path d="M26 2h3v22h-3z" fill="#dcdcdc" />
        </svg>
        <span className="pt-[5px]">1197 / 2 Mb</span>
        <svg width="18" height="18" viewBox="0 0 18 18" className="mr-[2px] ml-auto self-end" aria-hidden="true">
          <path d="M13 1h4v4h-4zM7 7h4v4H7zM13 7h4v4h-4zM1 13h4v4H1zM7 13h4v4H7zM13 13h4v4h-4z" fill="#bdbdbd" />
        </svg>
      </span>
    </footer>
  );
}

export default function App() {
  return (
    <div className="flex min-h-screen flex-col overflow-hidden bg-white font-['DejaVu_Sans_Condensed','Noto_Sans',sans-serif] text-black">
      <MenuBar />
      <Toolbar />
      <div className="flex flex-1 flex-col border-t-2 border-r-2 border-b-2 border-l-2 border-t-[#a0a0a0] border-r-white border-b-white border-l-[#a0a0a0]">
        <Charts />
      </div>
      <Tabs />
      <StatusBar />
    </div>
  );
}
